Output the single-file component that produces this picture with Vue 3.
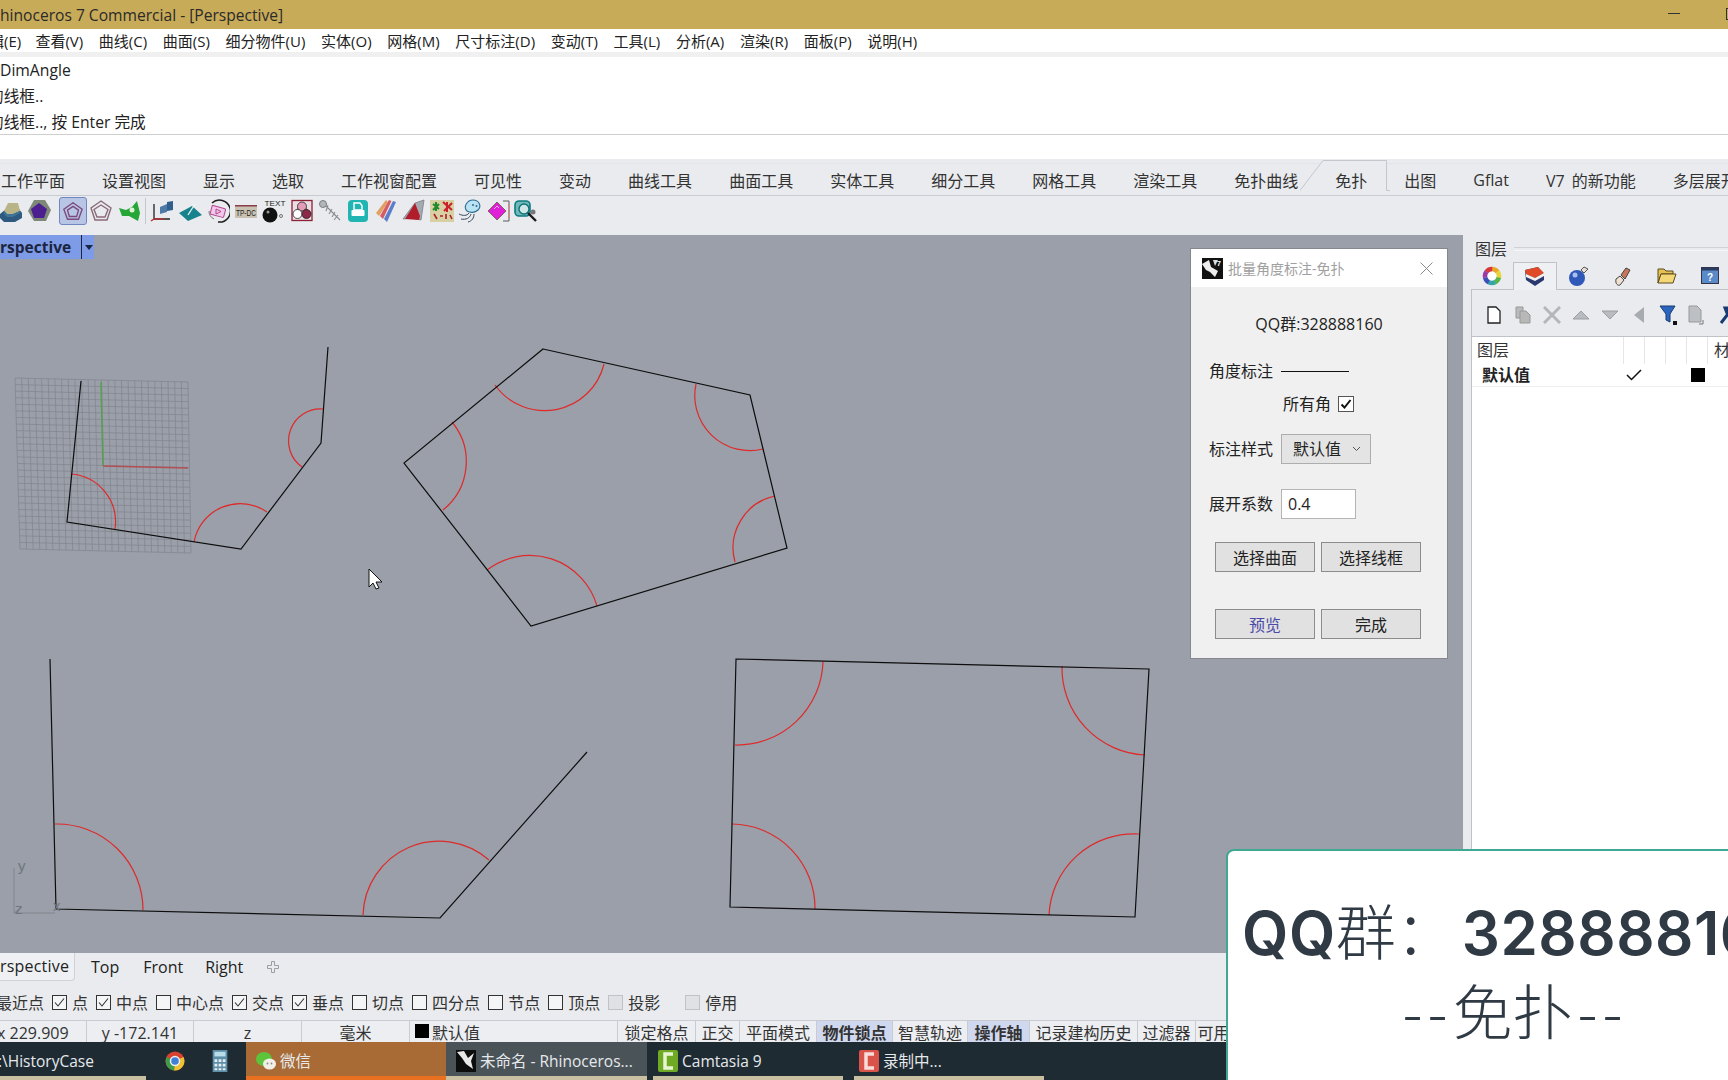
<script setup>
const menus = ['查看(V)','曲线(C)','曲面(S)','细分物件(U)','实体(O)','网格(M)','尺寸标注(D)','变动(T)','工具(L)','分析(A)','渲染(R)','面板(P)','说明(H)']
const tabs = ['工作平面','设置视图','显示','选取','工作视窗配置','可见性','变动','曲线工具','曲面工具','实体工具','细分工具','网格工具','渲染工具','免扑曲线','免扑','出图','Gflat','V7 的新功能','多层展开']
const snaps = [['点',true],['中点',true],['中心点',false],['交点',true],['垂点',true],['切点',false],['四分点',false],['节点',false],['顶点',false]]
const status = [['锁定格点',78],['正交',44],['平面模式',77],['物件锁点',76,1],['智慧轨迹',75],['操作轴',62,1],['记录建构历史',108],['过滤器',58],['可用',36]]

const Q = [[15,378],[188,382],[191,553],[20,549]]
const lerp = (a,b,t) => [a[0]+(b[0]-a[0])*t, a[1]+(b[1]-a[1])*t]
const gridPath = (() => {
  const n = 26
  let d = ''
  for (let i = 0; i <= n; i++) {
    const t = i / n
    const a = lerp(Q[0],Q[1],t), b = lerp(Q[3],Q[2],t), c = lerp(Q[0],Q[3],t), e = lerp(Q[1],Q[2],t)
    d += `M${a[0]} ${a[1]}L${b[0]} ${b[1]}M${c[0]} ${c[1]}L${e[0]} ${e[1]}`
  }
  return d
})()
const lines = [
  'M81 381L67 522L241 549L321 443L328 347',
  'M543 349L750 395L787 548L531 626L404 463Z',
  'M50 659L56 909L440 918L587 752',
  'M736 659L1149 669L1135 917L730 907Z'
]
const arcs = [
  [71,474,115,529,48,1],[194,542,267,512,47,1],[323,409,302,467,32,0],
  [495,385,604,364,61,0],[696,384,763,449,55,0],[775,496,735,562,53,0],[487,570,597,606,70,1],[452,422,443,510,62,1],
  [55,824,143,910,86,1],[363,915,489,860,76,1],
  [823,662,735,745,86,1],[1062,666,1145,755,87,0],[1139,834,1049,915,85,0],[732,824,815,909,84,1]
].map(([a,b,c,d,r,s]) => `M${a} ${b}A${r} ${r} 0 0 ${s} ${c} ${d}`)
const wheel = ['#e9a52c','#e8d534','#57b548','#2fa6a8','#3a4fb8','#9a3aa8','#d8363a'].map((color, i, all) => {
  const step = Math.PI * 2 / all.length
  const p = t => `${(10 + 7 * Math.cos(t)).toFixed(2)} ${(10 + 7 * Math.sin(t)).toFixed(2)}`
  const start = step * i - Math.PI / 2
  return { color, d: `M${p(start)}A7 7 0 0 1 ${p(start + step + 0.03)}` }
})
</script>

<template>
  <div class="app">
    <header class="title">
      <span class="title-text">hinoceros 7 Commercial - [Perspective]</span>
      <span class="win-min"></span>
      <span class="win-max"></span>
    </header>
    <nav class="menu">
      <span class="menu-first">辑(E)</span>
      <span v-for="m in menus" :key="m">{{ m }}</span>
    </nav>
    <div class="strip"></div>
    <section class="history">
      <div class="hist-first">DimAngle</div>
      <div class="hist-cut">的线框..</div>
      <div class="hist-cut">的线框.., 按 Enter 完成</div>
    </section>
    <div class="command"></div>
    <div class="tabs">
      <span v-for="t in tabs" :key="t" class="tab" :class="{ active: t === '免扑' }">
        <svg v-if="t === '免扑'" class="tab-outline" width="90" height="31" viewBox="0 0 90 31">
          <path d="M0 30.500L23 .5H86.500V30.500H90" fill="#e9ebee" stroke="#c3c7cd" />
        </svg>
        <span class="tab-label">{{ t }}</span>
      </span>
    </div>
    <div class="tools">
      <svg class="ti first" viewBox="0 0 24 24"><path d="M1 15L7 10H20L23 14V19L16 23H5L1 19Z" fill="#2d5a7e"/><path d="M5 12L9 4H19L21 12L14 15H8Z" fill="#b9b488"/><path d="M5 12L8 15H14L21 12V14L14 18H8L5 15Z" fill="#3f7397"/></svg>
      <svg class="ti" viewBox="0 0 24 24"><path d="M7 1H18L24 11L19 22H7L1 12Z" fill="#7d8878"/><path d="M12 4L20 10L17 19H7L4 10Z" fill="#4b1f90"/></svg>
      <span class="ti-active"><svg viewBox="0 0 24 24"><path d="M12 3L22 10L18 21H6L2 10Z M12 7L18 11L16 18H8L6 11Z" fill="none" stroke="#7b4a80" stroke-width="1.500"/></svg></span>
      <svg class="ti pull" viewBox="0 0 24 24"><path d="M12 2L22 9L18 21H6L2 9Z M12 6L19 10.500L16 18H8L5 10.500Z" fill="none" stroke="#8a6a78" stroke-width="1.400"/></svg>
      <svg class="ti" viewBox="0 0 24 24"><path d="M2 9L9 11L15 8L20 2L23 14L21 22L12 17L5 17Z" fill="#25a637"/><circle cx="15" cy="11" r="2.500" fill="#dff2d8"/></svg>
      <span class="ti-sep"></span>
      <svg class="ti" viewBox="0 0 24 24"><path d="M4 5V20H20" fill="none" stroke="#222" stroke-width="1.300"/><path d="M4 20L1 22" stroke="#c03030" stroke-width="1.500"/><path d="M10 8L17 5V13L10 15Z" fill="#4e7aa8"/><path d="M17 3L23 2V11L17 12Z" fill="#2f5f8c"/><path d="M4 20H14" stroke="#c03030" stroke-width="1.300"/></svg>
      <svg class="ti" viewBox="0 0 24 24"><path d="M1 14L14 7L24 16L10 22Z" fill="#17828c"/><path d="M10 16L17 5" stroke="#e8f8f8" stroke-width="1.300"/></svg>
      <svg class="ti" viewBox="0 0 24 24"><path d="M6 4A11 11 0 1 1 12 23" fill="none" stroke="#1d1d1d" stroke-width="1.500"/><path d="M3 12A9 9 0 0 0 8 20" fill="none" stroke="#777"/><rect x="5" y="8" width="14" height="9" rx="1" fill="#f2c7ea" stroke="#b0468f" transform="rotate(15 12 12)"/><path d="M10 10L15 12.500L10 15Z" fill="none" stroke="#b0468f"/></svg>
      <svg class="ti" viewBox="0 0 24 24"><rect x="1" y="6" width="22" height="13" fill="#c9c2b2"/><rect x="1" y="6" width="22" height="1.500" fill="#8a3d4a"/><text x="12" y="17" text-anchor="middle" font-size="9" class="svgt" textLength="20" lengthAdjust="spacingAndGlyphs">TP-DC</text></svg>
      <svg class="ti" viewBox="0 0 24 24"><text x="13" y="7" text-anchor="middle" font-size="8" class="svgt" textLength="21" lengthAdjust="spacingAndGlyphs">TEXT</text><circle cx="8" cy="16" r="7.500" fill="#111"/><circle cx="6" cy="13" r="1.500" fill="#999"/><circle cx="19" cy="17" r="1.500" fill="none" stroke="#555" stroke-width=".8"/></svg>
      <svg class="ti" viewBox="0 0 24 24"><rect x="2" y="1.500" width="20" height="20" fill="#eadde3" stroke="#8c2035" stroke-width="1.300"/><path d="M4 14L12 5L20 14" fill="none" stroke="#333"/><circle cx="12" cy="7.500" r="4.500" fill="#e29cb7" stroke="#222" stroke-width=".8"/><circle cx="7.500" cy="15" r="4.500" fill="#fff" stroke="#222" stroke-width=".8"/><circle cx="16.500" cy="15" r="4.500" fill="#8c2848" stroke="#222" stroke-width=".8"/></svg>
      <svg class="ti" viewBox="0 0 24 24"><circle cx="5" cy="5" r="3.500" fill="#b4b7ba" stroke="#7a7d80"/><path d="M8 7L22 21M10 6L8 12M14 10L11 15M17 13L14 18M20 16L16 21" stroke="#8a8d90" stroke-width="1.100" fill="none"/></svg>
      <svg class="ti" viewBox="0 0 24 24"><rect x="2" y="1" width="20" height="22" rx="4" fill="#20b5b3"/><path d="M8 4H14L16 6.500V11H8Z" fill="none" stroke="#fff" stroke-width="1.400"/><rect x="5.500" y="11" width="13" height="6" rx="1" fill="#fff"/></svg>
      <svg class="ti" viewBox="0 0 24 24"><path d="M2 14L12 1L14 3L5 17Z" fill="#e2a063"/><path d="M6 17L15 1L17.500 2L9 20Z" fill="#d85b64"/><path d="M10 20L19 2L22 3L13 23Z" fill="#5b7ec8"/></svg>
      <svg class="ti" viewBox="0 0 24 24"><path d="M1 20L9 19L19 21L22 1L13 4Z" fill="#a4aab0" stroke="#7a7f85" stroke-width=".8"/><path d="M3 20L10 9L13 4L18 17L17 21Z" fill="#b01e2b"/></svg>
      <svg class="ti wide" viewBox="0 0 24 24"><rect x="0" y="1" width="24" height="22" fill="#d8cfa4"/><path d="M3 5L9 10M9 5L3 11M6 3V12" stroke="#1f8a2a" stroke-width="2"/><path d="M13 3L22 11M22 4L14 12M17 3V13" stroke="#c9202a" stroke-width="2"/><path d="M4 15L7 20M10 17H13M16 15V20M20 16L22 20" stroke="#a8202a" stroke-width="1.600"/></svg>
      <svg class="ti" viewBox="0 0 24 24"><path d="M9 12C5 8 9 1 15 1C21 1 24 7 20 11C17 14 12 14 9 12Z" fill="#b9e2f2" stroke="#2e6a92" stroke-width="1.100"/><circle cx="15" cy="6" r="1" fill="#2e6a92"/><circle cx="18.500" cy="7" r="1" fill="#2e6a92"/><path d="M11 14C9 17 5 17 1 15M13 15C12 19 8 21 3 20M16 15C16 19 14 22 10 23" fill="none" stroke="#33475a"/></svg>
      <svg class="ti" viewBox="0 0 24 24"><path d="M11 3L20 12L11 21L2 12Z" fill="#e020d8" stroke="#552" stroke-width=".7"/><path d="M8 10L11 7L13 9" stroke="#f6b8f2" fill="none"/><path d="M17 2H23V22H17" fill="none" stroke="#5a5a5a"/><path d="M23 5V19" stroke="#c88a8a" stroke-width="1.500"/></svg>
      <svg class="ti" viewBox="0 0 24 24"><rect x="1" y="2" width="15" height="15" rx="4" fill="#6fbab8" stroke="#0f7a82" stroke-width="1.600"/><circle cx="10" cy="10" r="5" fill="#cfe6e6" stroke="#10707a" stroke-width="1.400"/><path d="M14 14L22 22" stroke="#1a1a1a" stroke-width="2.400"/><circle cx="19" cy="13" r="2.500" fill="#777"/></svg>
    </div>
    <main class="main">
      <section class="viewport">
        <svg class="canvas" width="1463" height="718" viewBox="0 235 1463 718">
          <path :d="gridPath" fill="none" stroke="#80848d" stroke-width=".7"/>
          <path d="M101 382L103 466" stroke="#57a052" stroke-width="1.600" fill="none"/>
          <path d="M103 466L188 468" stroke="#b24f55" stroke-width="1.600" fill="none"/>
          <path v-for="(d, i) in arcs" :key="'a' + i" :d="d" fill="none" stroke="#df2a2a" stroke-width="1.200"/>
          <path v-for="(d, i) in lines" :key="'l' + i" :d="d" fill="none" stroke="#0d0d0d" stroke-width="1.200"/>
          <path d="M14 868V913H55M14 913L22 907" fill="none" stroke="#80858d"/>
          <text x="18" y="871" class="axis">y</text>
          <text x="15" y="914" class="axis">z</text>
          <text x="53" y="911" class="axis">x</text>
          <path d="M369 569V587L373 583L376 589L379 588L376 582H382Z" fill="#fff" stroke="#111"/>
        </svg>
        <div class="view-label">
          <span class="vl-text">rspective</span>
          <span class="vl-sep"></span>
          <span class="vl-arrow"></span>
        </div>
        <div class="dialog">
          <div class="dlg-title">
            <svg class="dlg-icon" width="21" height="21" viewBox="0 0 21 21"><rect width="21" height="21" fill="#111"/><path d="M0 6L7 2L9 9L16 13L13 19L8 14L4 12Z" fill="#eee"/><path d="M11 2L13 8L16 2Z" fill="#ddd"/><text x="15" y="8" font-size="7" fill="#fff" class="svgfill">7</text></svg>
            <span class="dlg-name">批量角度标注-免扑</span>
            <svg class="dlg-x" width="13" height="13" viewBox="0 0 13 13"><path d="M.5 .5L12.500 12.500M12.500 .5L.5 12.500" stroke="#8a8a8a" fill="none"/></svg>
          </div>
          <div class="qq">QQ群:328888160</div>
          <div class="row first-row"><span class="lbl">角度标注</span><span class="rule"></span></div>
          <div class="row all"><span>所有角</span><span class="dlg-check"><svg width="12" height="12" viewBox="0 0 12 12"><path d="M1.500 6.500L4.500 9.500L10.500 2" fill="none" stroke="#111" stroke-width="2"/></svg></span></div>
          <div class="row sel-row"><span class="lbl">标注样式</span><div class="select"><span>默认值</span><svg width="9" height="6" viewBox="0 0 9 6"><path d="M1 1L4.500 4.500L8 1" fill="none" stroke="#555"/></svg></div></div>
          <div class="row inp-row"><span class="lbl">展开系数</span><div class="input">0.4</div></div>
          <div class="btns b1"><button>选择曲面</button><button>选择线框</button></div>
          <div class="btns b2"><button class="blue">预览</button><button>完成</button></div>
        </div>
      </section>
      <aside class="panel">
        <div class="panel-head"><span>图层</span><span class="etched"></span></div>
        <div class="panel-tabs">
          <span class="ptab"><svg width="20" height="20" viewBox="0 0 20 20"><circle cx="10" cy="10" r="4.500" fill="#fff"/><path v-for="s in wheel" :key="s.color" :d="s.d" fill="none" :stroke="s.color" stroke-width="4.500"/></svg></span>
          <span class="ptab on"><svg width="22" height="22" viewBox="0 0 22 22"><path d="M1 4L14 1L20 8L20 14L11 20L2 14Z" fill="#2a3a70"/><path d="M1 4L14 1L20 7L11 12L2 8Z" fill="#e04a28"/><path d="M2 8L11 12L20 7V10L11 15L2 11Z" fill="#f4f0ea"/></svg></span>
          <span class="ptab"><svg width="22" height="22" viewBox="0 0 22 22"><circle cx="9" cy="13" r="8" fill="#2f58b8"/><circle cx="7" cy="10" r="2.500" fill="#a8c0ee"/><path d="M13 5L16 2L20 4L16 8Z" fill="#e8e0d8" stroke="#555"/></svg></span>
          <span class="ptab"><svg width="20" height="22" viewBox="0 0 20 22"><path d="M3 14L7 11L11 15L7 20C5 21 2 19 3 14Z" fill="#f0e0d0" stroke="#444"/><path d="M8 10L13 3L17 5L12 14Z" fill="#c87858" stroke="#444"/></svg></span>
          <span class="ptab"><svg width="20" height="16" viewBox="0 0 20 16"><path d="M1 1H7L9 3H16V6H4L1 15Z" fill="#e6c050" stroke="#5a4a20"/><path d="M4 6H19L16 15H1Z" fill="#f4d878" stroke="#5a4a20"/></svg></span>
          <span class="ptab"><svg width="20" height="20" viewBox="0 0 20 20"><rect x=".5" y="1.500" width="17" height="16" fill="#5a8ac8" stroke="#334"/><rect x=".5" y="1.500" width="17" height="3" fill="#2a3a60"/><text x="9" y="15" text-anchor="middle" font-size="10" class="svgfill" fill="#fff">?</text></svg></span>
        </div>
        <div class="panel-body">
          <div class="ptools">
            <span class="pt"><svg width="14" height="18" viewBox="0 0 14 18"><path d="M1 1H9L13 5V17H1Z" fill="#fff" stroke="#222" stroke-width="1.300"/></svg></span>
            <span class="pt"><svg width="16" height="18" viewBox="0 0 16 18"><path d="M1 1H8L8 12H1Z" fill="#bbb" stroke="#999"/><path d="M5 5H11L15 9V17H5Z" fill="#b8b8b8" stroke="#999"/></svg></span>
            <span class="pt"><svg width="18" height="18" viewBox="0 0 18 18"><path d="M1 1L17 17M17 1L1 17" stroke="#b4b7ba" stroke-width="3"/></svg></span>
            <span class="pt"><svg width="18" height="10" viewBox="0 0 18 10"><path d="M9 1L17 9H1Z" fill="#b8bbbf" stroke="#9b9ea2"/></svg></span>
            <span class="pt"><svg width="18" height="10" viewBox="0 0 18 10"><path d="M1 1H17L9 9Z" fill="#b8bbbf" stroke="#9b9ea2"/></svg></span>
            <span class="pt"><svg width="12" height="18" viewBox="0 0 12 18"><path d="M11 1V17L1 9Z" fill="#a8abaf"/></svg></span>
            <span class="pt"><svg width="18" height="20" viewBox="0 0 18 20"><path d="M1 1H16L11 9V17L7 15V9Z" fill="#2a66c0" stroke="#1a3a70"/><path d="M14 16H18V20H14Z" fill="#111"/></svg></span>
            <span class="pt"><svg width="18" height="20" viewBox="0 0 18 20"><path d="M1 1H9L13 5V17H1Z" fill="#bcbfc3" stroke="#999"/><path d="M15 15V19H11" fill="none" stroke="#777"/></svg></span>
            <span class="pt"><svg width="14" height="18" viewBox="0 0 14 18"><path d="M2 17L9 8M6 2H14L12 8L8 7Z" stroke="#1a3a70" stroke-width="3" fill="#1a3a70"/></svg></span>
          </div>
          <div class="list">
            <div class="lhead"><span class="lname">图层</span><span class="lc"></span><span class="lc"></span><span class="lc"></span><span class="lc"></span><span class="lc mat">材</span></div>
            <div class="lrow"><span class="lname strong">默认值</span><span class="lc2"><svg width="16" height="12" viewBox="0 0 16 12"><path d="M1 6L5.500 10.500L15 1" fill="none" stroke="#111" stroke-width="1.500"/></svg></span><span class="lc2"></span><span class="lc2"></span><span class="lc2 sq"><i></i></span></div>
          </div>
        </div>
      </aside>
    </main>
    <div class="vtabs">
      <span class="vt-on">rspective</span>
      <span class="vt top">Top</span>
      <span class="vt">Front</span>
      <span class="vt">Right</span>
      <svg class="vt-add" width="12" height="12" viewBox="0 0 12 12"><path d="M4.500 .5H7.500V4.500H11.500V7.500H7.500V11.500H4.500V7.500H.5V4.500H4.500Z" fill="none" stroke="#9a9ea4"/></svg>
    </div>
    <div class="snaps">
      <span class="snap-first">最近点</span>
      <span v-for="s in snaps" :key="s[0]" class="snap">
        <span class="cb"><svg v-if="s[1]" width="11" height="11" viewBox="0 0 11 11"><path d="M1 5.500L4 9L10 1.500" fill="none" stroke="#333" stroke-width="1.100"/></svg></span>
        <span>{{ s[0] }}</span>
      </span>
      <span class="snap"><span class="cb off"></span><span>投影</span></span>
      <span class="snap stop"><span class="cb off"></span><span>停用</span></span>
    </div>
    <div class="status">
      <span class="cell cx"><span class="cx-in">x 229.909</span></span>
      <span class="cell cy">y -172.141</span>
      <span class="cell cz">z</span>
      <span class="cell cz">毫米</span>
      <span class="cell clayer"><i></i>默认值</span>
      <span v-for="s in status" :key="s[0]" class="cell toggle" :class="{ lit: s[2] }" :style="{ width: s[1] + 'px' }">{{ s[0] }}</span>
    </div>
    <footer class="taskbar">
      <div class="task hist">:\HistoryCase</div>
      <div class="tray">
        <svg width="20" height="20" viewBox="0 0 20 20"><circle cx="10" cy="10" r="9.500" fill="#d8422e"/><path d="M10 10L18.500 6A9.500 9.500 0 0 1 9 19.500Z" fill="#edc233"/><path d="M10 10L9 19.500A9.500 9.500 0 0 1 1.500 6Z" fill="#3f9c48"/><circle cx="10" cy="10" r="4.500" fill="#3f7fd8" stroke="#eee" stroke-width="1.500"/></svg>
        <svg width="16" height="22" viewBox="0 0 16 24"><rect width="16" height="24" fill="#5e8fa8"/><rect x="2" y="2" width="12" height="5" fill="#b8dce8"/><path d="M2 10H5V13H2ZM6.500 10H9.500V13H6.500ZM11 10H14V13H11ZM2 15H5V18H2ZM6.500 15H9.500V18H6.500ZM11 15H14V18H11ZM2 20H5V22H2ZM6.500 20H9.500V22H6.500ZM11 20H14V22H11Z" fill="#e6eef2"/></svg>
      </div>
      <div class="task wechat">
        <svg width="20" height="20" viewBox="0 0 20 20"><ellipse cx="8" cy="8" rx="8" ry="7" fill="#5cc43a"/><ellipse cx="13.500" cy="13" rx="6.500" ry="5.500" fill="#f0efe8"/><circle cx="11.500" cy="12.500" r=".9" fill="#888"/><circle cx="15.500" cy="12.500" r=".9" fill="#888"/></svg>
        <span>微信</span>
      </div>
      <div class="task rhino">
        <svg width="20" height="22" viewBox="0 0 20 22"><rect width="20" height="22" fill="#0d0d0d"/><path d="M1 2L6 8L10 14L17 19L15 11L18 3L12 8L8 1Z" fill="#e8e8e8"/></svg>
        <span>未命名 - Rhinoceros...</span>
      </div>
      <div class="task cam">
        <svg width="20" height="22" viewBox="0 0 20 22"><rect width="20" height="22" rx="2" fill="#6faa24"/><path d="M15 4H7V18H15" fill="none" stroke="#e9f5d2" stroke-width="3.500"/></svg>
        <span>Camtasia 9</span>
      </div>
      <div class="task rec">
        <svg width="20" height="22" viewBox="0 0 20 22"><rect width="20" height="22" rx="2" fill="#d9534a"/><path d="M15 4H7V18H15" fill="none" stroke="#f8dcd8" stroke-width="3.500"/></svg>
        <span>录制中...</span>
      </div>
    </footer>
    <div class="popup">
      <div class="p-line1"><span class="p-lat">QQ</span><span class="p-cjk">群：</span><span class="p-lat num">328888160</span></div>
      <div class="p-line2"><span class="dash">--</span>免扑<span class="dash end">--</span></div>
    </div>
  </div>
</template>

<style>
html, body { margin: 0; background: #e9ebee; }
</style>

<style scoped>
.app {
  --ui: "Open Sans", "Noto Sans CJK SC", sans-serif;
  position: relative;
  width: 1728px;
  height: 1080px;
  overflow: hidden;
  display: flex;
  flex-direction: column;
  font-family: var(--ui);
  color: #222;
  background: #e9ebee;
}
.title { height: 29px; flex: none; background: #c8ab58; display: flex; align-items: center; font-size: 15.600px; color: #2a2a2a; position: relative; }
.title-text { white-space: nowrap; }
.win-min { position: absolute; left: 1668px; top: 13px; width: 12px; height: 1px; background: #333; }
.win-max { position: absolute; left: 1726px; top: 8px; width: 10px; height: 10px; border: 1px solid #333; }
.menu { height: 23px; flex: none; background: #fff; display: flex; gap: 15.700px; align-items: center; font-size: 15px; white-space: nowrap; }
.menu-first { margin: 0 -1.500px 0 -11px; }
.strip { height: 5px; flex: none; background: #f0f0f0; }
.history { height: 77px; flex: none; background: #fff; border-bottom: 1px solid #cfcfcf; font-size: 15.700px; line-height: 26px; padding-top: 0; box-sizing: content-box; }
.hist-cut { margin-left: -12px; white-space: nowrap; }
.command { height: 24px; flex: none; background: #fff; }
.tabs { flex: none; margin-top: 4px; background: #e9ebee; border-top: 1px solid #e2e4e8; border-bottom: 1px solid #c8ccd2; display: flex; align-items: center; font-size: 16px; white-space: nowrap; color: #333; box-sizing: border-box; height: 33px; word-spacing: 3px; }
.tab { padding: 0 18.500px; position: relative; }
.tab:first-child { margin-left: -17.500px; }
.tab-outline { position: absolute; left: -17px; top: -8px; }
.tab-label { position: relative; }
.tools { height: 39px; flex: none; display: flex; align-items: center; gap: 4px; background: #e9ebee; padding-bottom: 10px; box-sizing: border-box; }
.ti { width: 24px; height: 24px; flex: none; }
.first { margin-left: -1px; }
.pull { margin-left: -2px; }
.ti-active { width: 28px; height: 28px; box-sizing: border-box; margin-left: 4px; background: #b9c5e4; border: 1px solid #6f88c2; border-radius: 3px; display: flex; align-items: center; justify-content: center; flex: none; }
.ti-active svg { width: 22px; height: 22px; }
.ti-sep { width: 1px; height: 26px; background: #c4c7cb; flex: none; }
.svgt { font-family: "Liberation Sans", sans-serif; fill: #222; }
.svgfill { font-family: "Liberation Sans", sans-serif; font-weight: 700; }
.main { height: 718px; flex: none; display: flex; }
.viewport { width: 1463px; flex: none; background: #9a9fa9; position: relative; overflow: hidden; }
.canvas { display: block; }
.axis { font: 15px "Liberation Sans", sans-serif; fill: #70757d; }
.view-label { position: absolute; left: 0; top: 0; width: 94px; height: 24px; background: #7d9be6; display: flex; align-items: center; font-size: 15.500px; line-height: 22px; font-weight: 700; color: #1c2540; }
.vl-text { width: 81px; }
.vl-sep { width: 1px; height: 24px; background: #1c2540; }
.vl-arrow { margin-left: 3px; width: 0; height: 0; border: 4px solid transparent; border-top: 5px solid #1c2540; border-bottom: 0; }
.dialog { position: absolute; left: 1190px; top: 13px; width: 258px; height: 411px; box-sizing: border-box; background: #f0f0f0; border: 1px solid #85898f; font-size: 16px; color: #222; }
.dlg-title { height: 38px; background: #fff; display: flex; align-items: center; padding-left: 11px; }
.dlg-name { margin-left: 5px; font-size: 14px; color: #a0a0a0; }
.dlg-x { margin-left: auto; margin-right: 14px; }
.qq { margin-top: 26px; line-height: 22px; text-align: center; font-size: 16px; }
.row { display: flex; align-items: center; padding-left: 18px; line-height: 22px; }
.lbl { width: 64px; margin-right: 8px; white-space: nowrap; }
.first-row { margin-top: 25px; }
.rule { width: 68px; height: 1px; background: #111; }
.all { margin-top: 11px; padding-left: 92px; gap: 7px; }
.dlg-check { width: 16px; height: 16px; box-sizing: border-box; background: #fff; border: 1px solid #555; display: flex; align-items: center; justify-content: center; }
.sel-row { margin-top: 19px; }
.select { width: 90px; height: 30px; box-sizing: border-box; background: #e4e4e4; border: 1px solid #adadad; display: flex; align-items: center; padding: 0 9px 0 11px; justify-content: space-between; }
.inp-row { margin-top: 25px; }
.input { width: 75px; height: 30px; box-sizing: border-box; background: #fff; border: 1px solid #b4b4b4; padding-left: 6px; line-height: 28px; }
.btns { display: flex; gap: 6px; padding-left: 24px; }
.b1 { margin-top: 23px; }
.b2 { margin-top: 37px; }
.btns button { width: 100px; height: 30px; padding: 0; background: #e1e1e1; border: 1px solid #8c8c8c; font: inherit; color: #222; }
.btns .blue { color: #4b4ba8; }
.panel { flex: 1; min-width: 0; display: flex; flex-direction: column; background: #e9ebee; padding-top: 0; }
.panel-head { height: 27px; display: flex; align-items: flex-end; padding-left: 12px; font-size: 16px; line-height: 26px; color: #333; }
.etched { flex: 1; height: 2px; margin: 0 0 11px 7px; border-top: 1px solid #cfd2d6; border-bottom: 1px solid #f6f7f8; }
.panel-tabs { height: 28px; display: flex; padding-left: 6px; }
.ptab { width: 44px; height: 28px; box-sizing: border-box; display: flex; align-items: center; justify-content: center; flex: none; border-bottom: 1px solid #bfc2c7; }
.ptab:first-child { margin-left: 2px; width: 42px; }
.ptab.on { border: 1px solid #bfc2c7; border-bottom: 0; background: #eef0f3; }
.panel-body { flex: 1; margin-left: 8px; border-left: 1px solid #bfc2c7; display: flex; flex-direction: column; background: #e9ebee; }
.ptools { height: 47px; display: flex; align-items: center; padding: 3px 0 0 7px; border-bottom: 1px solid #bfc2c7; box-sizing: border-box; flex: none; }
.pt { width: 29px; flex: none; display: flex; align-items: center; justify-content: center; }
.list { flex: 1; background: #fff; }
.lhead { height: 27px; display: flex; font-size: 16px; color: #333; align-items: stretch; line-height: 27px; }
.lname { width: 151px; padding-left: 5px; box-sizing: border-box; flex: none; }
.lc { width: 21px; box-sizing: border-box; border-left: 1px solid #e6e6e6; flex: none; }
.mat { padding-left: 6px; width: 40px; overflow: hidden; }
.lrow { height: 22px; display: flex; align-items: center; border-bottom: 1px solid #eee; font-size: 16px; line-height: 20px; }
.strong { font-weight: 700; padding-left: 10px; }
.lc2 { width: 21px; flex: none; display: flex; align-items: center; justify-content: center; }
.sq i { display: block; width: 14px; height: 14px; background: #000; margin-left: 2px; }
.vtabs { height: 37px; flex: none; display: flex; align-items: flex-start; font-size: 16px; color: #222; }
.vt-on { width: 75px; height: 28px; box-sizing: border-box; line-height: 27px; background: #eef0f3; border: 1px solid #cfd2d6; border-top: 0; border-left: 0; border-radius: 0 0 4px 0; white-space: nowrap; letter-spacing: .2px; }
.vt { line-height: 28px; margin-right: 22px; }
.top { margin-left: 16px; margin-right: 24px; }
.vt-add { margin: 8px 0 0 2px; }
.snaps { height: 30px; flex: none; display: flex; align-items: center; font-size: 16px; white-space: nowrap; color: #333; margin-left: -4px; gap: 8px; padding-bottom: 6px; box-sizing: border-box; }
.snap { display: flex; align-items: center; gap: 5px; }
.cb { width: 15px; height: 15px; box-sizing: border-box; border: 1px solid #333; background: #f4f5f7; display: flex; align-items: center; justify-content: center; }
.cb.off { border-color: #bfc2c6; background: #dfe1e4; }
.stop { margin-left: 17px; }
.status { height: 22px; flex: none; display: flex; overflow: hidden; border-top: 1px solid #c8ccd2; box-sizing: border-box; font-size: 16px; line-height: 24px; white-space: nowrap; background: #eceef1; color: #333; }
.cell { box-sizing: border-box; flex: none; border-right: 1px solid #c8ccd2; text-align: center; }
.cx { width: 87px; text-align: left; overflow: hidden; }
.cx-in { display: block; margin-left: -3px; }
.cy { width: 107px; }
.cz { width: 108px; }
.clayer { width: 208px; text-align: left; padding-left: 5px; display: flex; align-items: flex-start; gap: 3px; }
.clayer i { width: 14px; height: 14px; background: #000; margin-top: 3px; }
.toggle.lit { background: #cfd8ef; font-weight: 700; }
.taskbar { height: 38px; flex: none; display: flex; background: #1f2b33; color: #e6e9ec; font-size: 15.500px; white-space: nowrap; }
.task { box-sizing: border-box; display: flex; align-items: center; gap: 4px; padding: 3px 0 0 10px; border-bottom: 4px solid #c8c0a0; }
.hist { width: 148px; padding-left: 0; margin-left: -2px; }
.tray { width: 100px; display: flex; align-items: center; padding-left: 19px; gap: 27px; box-sizing: border-box; flex: none; }
.wechat { width: 200px; background: #a86b36; border-bottom-color: #e8701e; }
.rhino { width: 201px; background: #4a5358; }
.cam { width: 190px; margin-left: 6px; padding-left: 5px; }
.rec { width: 190px; margin-left: 11px; padding-left: 5px; }
.popup { position: absolute; left: 1226px; top: 849px; width: 574px; height: 300px; box-sizing: border-box; background: #fff; border: 2px solid #3fa893; border-radius: 8px 0 0 0; color: #2f3a44; text-align: center; white-space: nowrap; font-family: Inter, "Noto Sans CJK SC", sans-serif; }
.p-line1 { margin-top: 39px; padding-left: 14px; line-height: 78px; font-size: 60px; }
.p-lat { font-weight: 600; letter-spacing: .5px; }
.p-cjk { font-weight: 300; font-family: "Noto Sans CJK SC", sans-serif; margin-right: 6px; }
.p-line2 { margin-top: 2px; padding-left: 4px; font-size: 60px; line-height: 70px; font-weight: 300; font-family: "Noto Sans CJK SC", sans-serif; }
.dash { letter-spacing: 5px; }
.end { margin-left: 5px; letter-spacing: 5px; }
</style>
